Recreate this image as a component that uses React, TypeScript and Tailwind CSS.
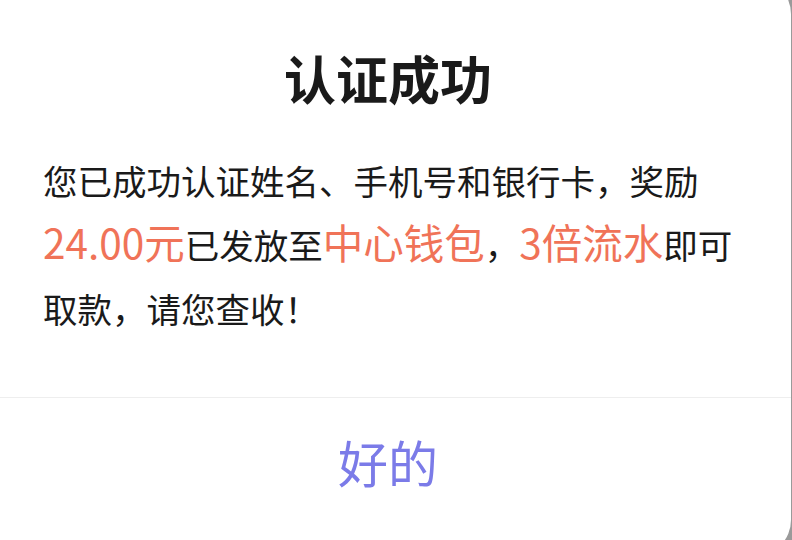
export default function App() {
  return (
    <div className="w-[792px] h-[540px] overflow-hidden bg-[#9a9a9a] font-['Noto_Sans_CJK_SC',sans-serif]">
      <div className="ml-[-15px] mt-[-22px] w-[806px] h-[578px] bg-white rounded-[36px] pt-[74px] flex flex-col">
        <h1 className="text-center text-[52px] leading-[52px] font-bold text-[#1a1a1a]">认证成功</h1>
        <div className="mt-[44px] px-[58px] text-[34.5px] leading-[64px] text-[#1a1a1a]">
          <div className="whitespace-nowrap">您已成功认证姓名、手机号和银行卡，奖励</div>
          <div className="whitespace-nowrap">
            <span className="text-[40.5px] leading-none text-[#f07358]">24.00元</span>已发放至
            <span className="text-[40.5px] leading-none text-[#f07358]">中心钱包</span>，
            <span className="text-[40.5px] leading-none text-[#f07358]">3倍流水</span>即可
          </div>
          <div className="whitespace-nowrap">取款，请您查收！</div>
        </div>
        <div className="mt-[57px] border-t border-[#eeeeee]" />
        <button className="h-[126px] flex items-center justify-center text-[50px] text-[#7b7be8]">
          好的
        </button>
      </div>
    </div>
  );
}
